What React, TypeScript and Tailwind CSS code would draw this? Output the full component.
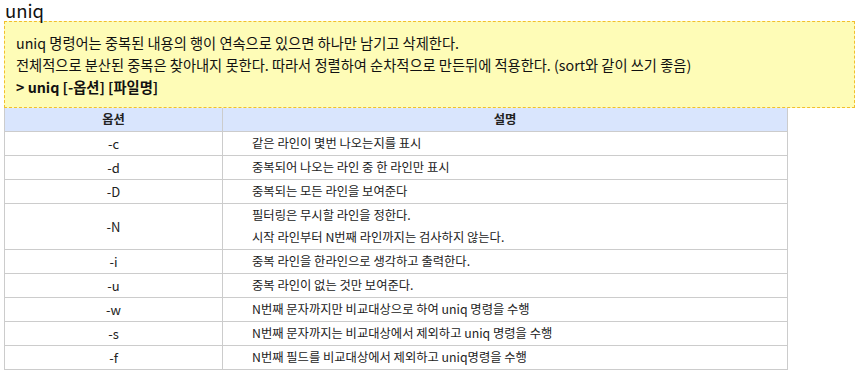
import React from "react";

const rows: { opt: string; desc: string[] }[] = [
  { opt: "-c", desc: ["같은 라인이 몇번 나오는지를 표시"] },
  { opt: "-d", desc: ["중복되어 나오는 라인 중 한 라인만 표시"] },
  { opt: "-D", desc: ["중복되는 모든 라인을 보여준다"] },
  { opt: "-N", desc: ["필터링은 무시할 라인을 정한다.", "시작 라인부터 N번째 라인까지는 검사하지 않는다."] },
  { opt: "-i", desc: ["중복 라인을 한라인으로 생각하고 출력한다."] },
  { opt: "-u", desc: ["중복 라인이 없는 것만 보여준다."] },
  { opt: "-w", desc: ["N번째 문자까지만 비교대상으로 하여 uniq 명령을 수행"] },
  { opt: "-s", desc: ["N번째 문자까지는 비교대상에서 제외하고 uniq 명령을 수행"] },
  { opt: "-f", desc: ["N번째 필드를 비교대상에서 제외하고 uniq명령을 수행"] },
];

export default function App() {
  return (
    <div
      className="bg-white w-[862px] h-[381px] pl-[4px] text-[#222]"
      style={{ fontFamily: '"Noto Sans CJK KR", "Noto Sans", sans-serif' }}
    >
      <div className="h-[21px] flex items-start pl-[1px] text-[#111]">
        <span className="text-[18.5px] leading-[20px]">uniq</span>
      </div>
      <div className="w-[851px] border border-dashed border-[#f2bf2c] bg-[#fefcb7] pl-[11px] pt-[10px] pb-[9px] text-[14.25px] leading-[22px] text-[#111]">
        <div>uniq 명령어는 중복된 내용의 행이 연속으로 있으면 하나만 남기고 삭제한다.</div>
        <div>전체적으로 분산된 중복은 찾아내지 못한다. 따라서 정렬하여 순차적으로 만든뒤에 적용한다. (sort와 같이 쓰기 좋음)</div>
        <div className="font-semibold">&gt; uniq [-옵션] [파일명]</div>
      </div>
      <div className="w-[784px] border-x border-b border-[#cccccc] text-[12.3px]">
        <div className="flex h-[24px] bg-[#d9e5fd] border-b border-[#cccccc] font-bold items-center">
          <div className="w-[218px] h-full flex items-center justify-center border-r border-[#cccccc]">옵션</div>
          <div className="flex-1 text-center">설명</div>
        </div>
        {rows.map((r, i) => (
          <div
            key={r.opt}
            className={`flex ${i < rows.length - 1 ? "border-b border-[#cccccc]" : ""}`}
          >
            <div className="w-[218px] flex items-center justify-center border-r border-[#cccccc] text-[13px]">{r.opt}</div>
            <div className={`flex-1 pl-[29px] ${r.desc.length > 1 ? "py-[1px] leading-[21.5px]" : "leading-[23px]"}`}>
              {r.desc.map((d) => (
                <div key={d}>{d}</div>
              ))}
            </div>
          </div>
        ))}
      </div>
    </div>
  );
}
